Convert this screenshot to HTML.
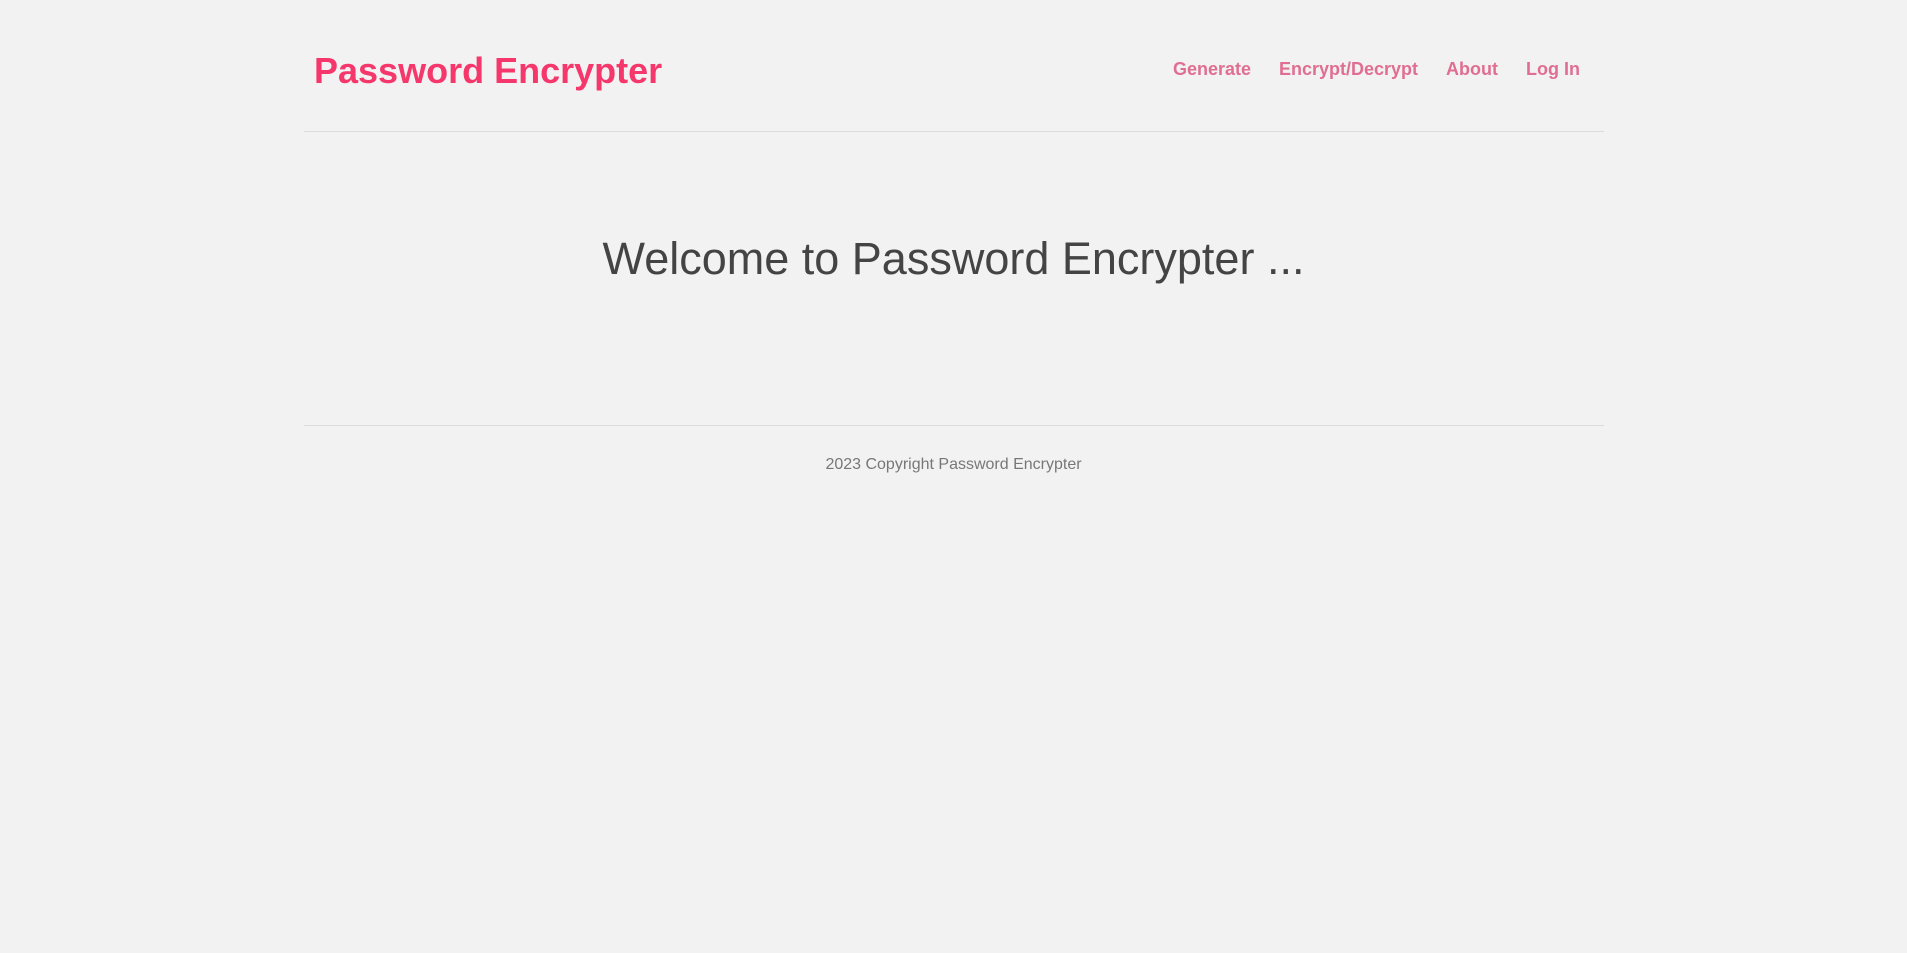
<!DOCTYPE html>
<html><head><style>
body{margin:0;background:#f2f2f2;font-family:"Liberation Sans",Arial,sans-serif;width:1907px;height:953px;position:relative;overflow:hidden}
.t{position:absolute;left:314px;top:50px;font-size:36px;font-weight:bold;color:#f5376b;white-space:nowrap}
.nav{position:absolute;top:59px;font-size:18px;font-weight:bold;color:#e06e93;white-space:nowrap}
.hr{position:absolute;left:304px;width:1300px;height:1px;background:#dcdcdc}
.w{position:absolute;left:0;width:1907px;text-align:center;top:233px;font-size:45px;color:#444;white-space:nowrap}
.f{position:absolute;left:0;width:1907px;text-align:center;top:456px;font-size:16px;color:#777}
</style></head><body>
<div class="t">Password Encrypter</div>
<div class="nav" style="left:1173px">Generate</div>
<div class="nav" style="left:1279px">Encrypt/Decrypt</div>
<div class="nav" style="left:1446px">About</div>
<div class="nav" style="left:1526px">Log In</div>
<div class="hr" style="top:131px"></div>
<div class="w">Welcome to Password Encrypter ...</div>
<div class="hr" style="top:425px"></div>
<div class="f">2023 Copyright Password Encrypter</div>
</body></html>
